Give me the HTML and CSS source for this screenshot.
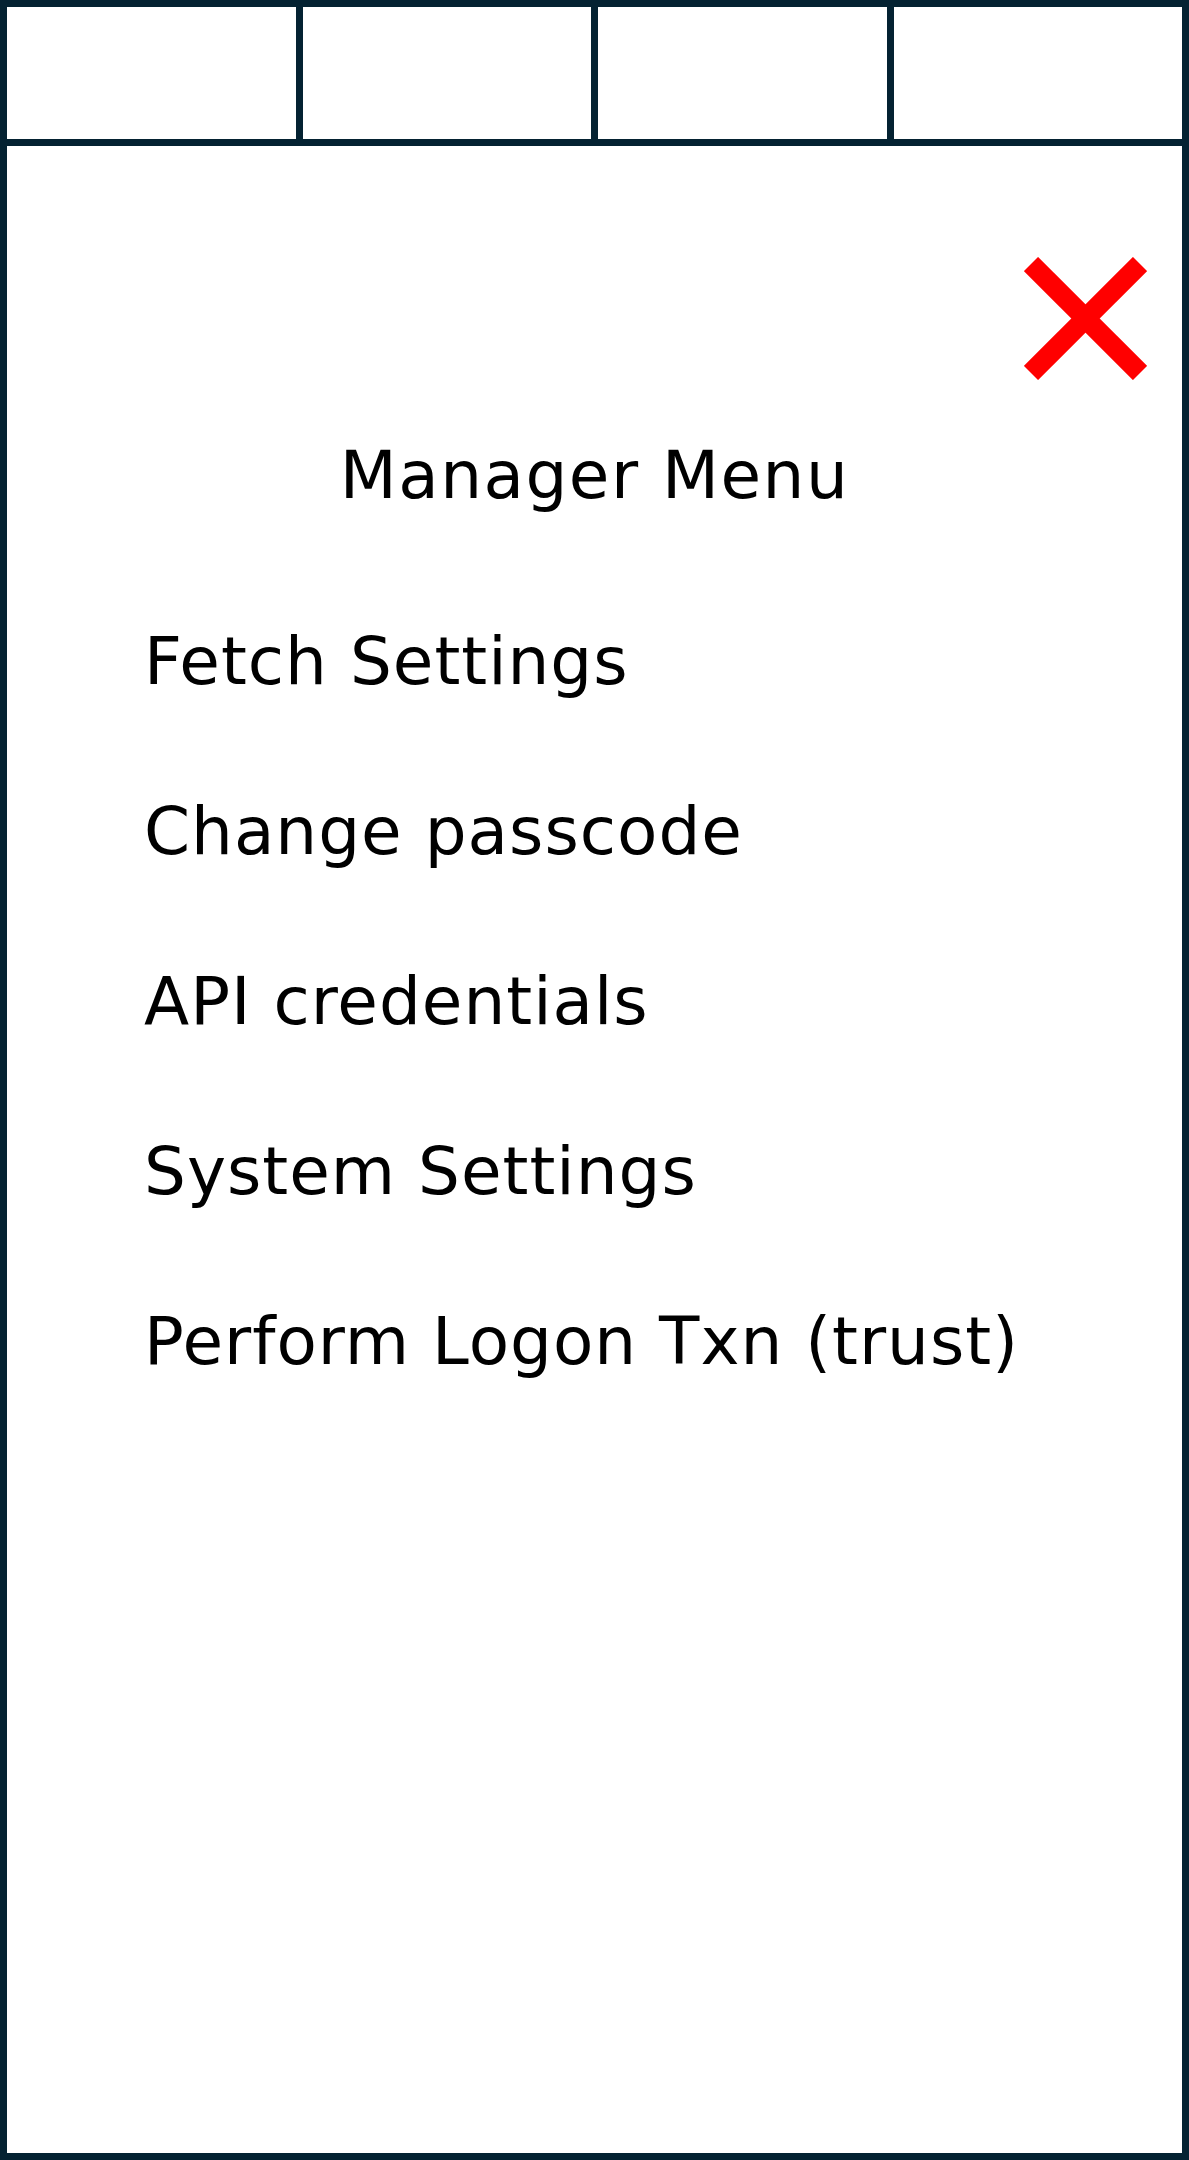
FILE: index.html
```html
<!DOCTYPE html>
<html lang="en">
<head>
<meta charset="utf-8">
<title>Manager Menu</title>
<link rel="stylesheet" href="styles.css">
</head>
<body>
<div class="frame">
  <div class="tabs">
    <div class="tab"></div>
    <div class="tab"></div>
    <div class="tab"></div>
    <div class="tab"></div>
  </div>
  <div class="panel">
    <div class="close-row">
      <button class="close" aria-label="Close">
        <svg width="123" height="123" viewBox="0 0 123 123">
          <line x1="7" y1="7" x2="116" y2="116" stroke="#ff0000" stroke-width="20"/>
          <line x1="116" y1="7" x2="7" y2="116" stroke="#ff0000" stroke-width="20"/>
        </svg>
      </button>
    </div>
    <h1 class="title">Manager Menu</h1>
    <ul class="menu">
      <li class="item">Fetch Settings</li>
      <li class="item">Change passcode</li>
      <li class="item">API credentials</li>
      <li class="item">System Settings</li>
      <li class="item">Perform Logon Txn (trust)</li>
    </ul>
  </div>
</div>
</body>
</html>
```
FILE: styles.css
```css
* { box-sizing: border-box; }

html, body {
  margin: 0;
  padding: 0;
  background: #ffffff;
}

body {
  font-family: "DejaVu Sans", "Liberation Sans", sans-serif;
  color: #000000;
}

.frame {
  width: 1189px;
  height: 2160px;
  border: 7px solid #042232;
  display: flex;
  flex-direction: column;
}

.tabs {
  display: flex;
  height: 139px;
  border-bottom: 7px solid #042232;
  flex: none;
}

.tab {
  flex: 1 1 0;
  border-right: 7px solid #042232;
}

.tab:last-child {
  border-right: none;
}

.panel {
  flex: 1;
  display: flex;
  flex-direction: column;
  padding: 111px 35px 0 137px;
}

.close-row {
  display: flex;
  justify-content: flex-end;
  height: 123px;
}

.close {
  width: 123px;
  height: 123px;
  padding: 0;
  margin: 0;
  border: none;
  background: transparent;
  cursor: pointer;
}

.close svg {
  display: block;
}

.title {
  margin: 56px -35px 0 -137px;
  font-size: 66px;
  font-weight: normal;
  line-height: 80px;
  letter-spacing: 1.5px;
  text-align: center;
}

.menu {
  list-style: none;
  margin: 106px 0 0 0;
  padding: 0;
  display: flex;
  flex-direction: column;
  gap: 90px;
}

.item {
  font-size: 66px;
  line-height: 80px;
  letter-spacing: 1px;
  white-space: nowrap;
}
```
